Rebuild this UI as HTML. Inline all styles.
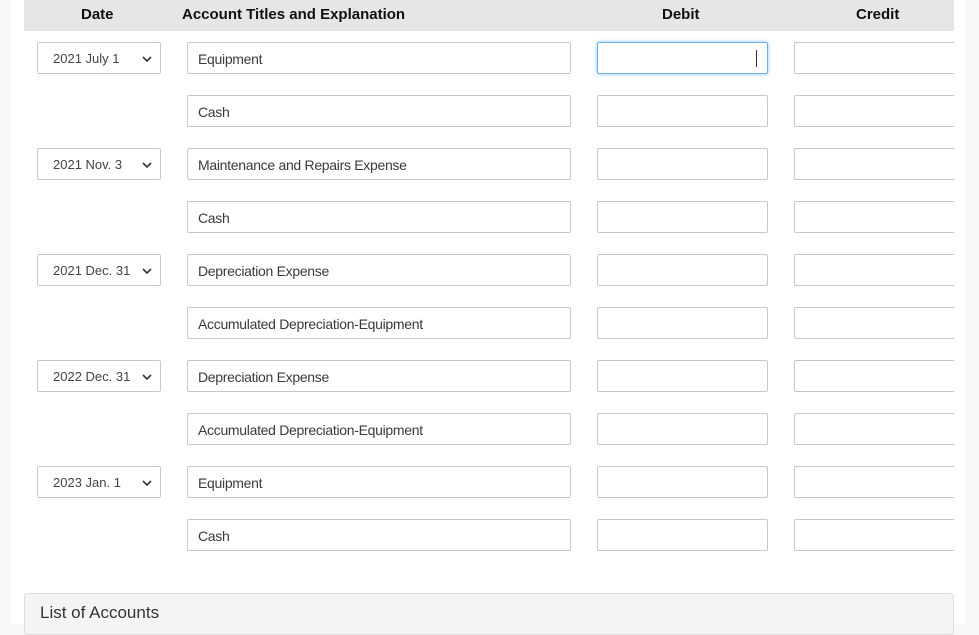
<!DOCTYPE html>
<html><head><style>
body{margin:0;width:979px;height:624px;overflow:hidden;background:#f7f7f7;font-family:"Liberation Sans",sans-serif;position:relative}
.panel{position:absolute;left:10px;top:0;width:956px;height:624px;background:#fff}
.hdr{position:absolute;left:24px;top:0;width:930px;height:31px;background:#e6e6e6}
.h{position:absolute;top:6px;font-weight:bold;font-size:15px;color:#111}
.b{position:absolute;height:30px;border:1px solid #c8c8c8;border-radius:2px;background:#fff;box-sizing:content-box;font-size:14px;color:#3a3a3a;line-height:32px}
.sel{left:37px;width:122px;font-size:13px;color:#444}
.sel span{padding-left:15px}
.sel svg{position:absolute;right:8px;top:13px}
.acc{left:187px;width:382px}
.acc span{padding-left:10px;letter-spacing:-0.3px}
.deb{left:597px;width:169px}
.cre{left:794px;width:170px}
.clip{position:absolute;left:0;top:0;width:954px;height:624px;overflow:hidden}
.list{position:absolute;left:24px;top:593px;width:928px;height:40px;background:#f4f4f4;border:1px solid #ddd;border-radius:3px}
.list span{position:absolute;left:15px;top:9px;font-size:17px;color:#333}
</style></head><body>
<div class="panel"></div>
<div class="hdr"></div>
<div class="h" style="left:81px">Date</div>
<div class="h" style="left:182px">Account Titles and Explanation</div>
<div class="h" style="left:662px">Debit</div>
<div class="h" style="left:856px">Credit</div>
<div class="clip">
<div class="b sel" style="top:42px"><span>2021 July 1</span><svg width="10" height="7" viewBox="0 0 10 7"><path d="M1 1l4 4 4-4" stroke="#333" stroke-width="1.6" fill="none"/></svg></div>
<div class="b acc" style="top:42px"><span>Equipment</span></div>
<div class="b deb" style="top:42px;border-color:#6ab0ef;box-shadow:0 0 4px #8cc4f5"><div style="position:absolute;left:158px;top:7px;width:1px;height:17px;background:#333"></div></div>
<div class="b cre" style="top:42px"></div>

<div class="b acc" style="top:95px"><span>Cash</span></div>
<div class="b deb" style="top:95px"></div><div class="b cre" style="top:95px"></div>

<div class="b sel" style="top:148px"><span>2021 Nov. 3</span><svg width="10" height="7" viewBox="0 0 10 7"><path d="M1 1l4 4 4-4" stroke="#333" stroke-width="1.6" fill="none"/></svg></div>
<div class="b acc" style="top:148px"><span>Maintenance and Repairs Expense</span></div>
<div class="b deb" style="top:148px"></div><div class="b cre" style="top:148px"></div>

<div class="b acc" style="top:201px"><span>Cash</span></div>
<div class="b deb" style="top:201px"></div><div class="b cre" style="top:201px"></div>

<div class="b sel" style="top:254px"><span>2021 Dec. 31</span><svg width="10" height="7" viewBox="0 0 10 7"><path d="M1 1l4 4 4-4" stroke="#333" stroke-width="1.6" fill="none"/></svg></div>
<div class="b acc" style="top:254px"><span>Depreciation Expense</span></div>
<div class="b deb" style="top:254px"></div><div class="b cre" style="top:254px"></div>

<div class="b acc" style="top:307px"><span>Accumulated Depreciation-Equipment</span></div>
<div class="b deb" style="top:307px"></div><div class="b cre" style="top:307px"></div>

<div class="b sel" style="top:360px"><span>2022 Dec. 31</span><svg width="10" height="7" viewBox="0 0 10 7"><path d="M1 1l4 4 4-4" stroke="#333" stroke-width="1.6" fill="none"/></svg></div>
<div class="b acc" style="top:360px"><span>Depreciation Expense</span></div>
<div class="b deb" style="top:360px"></div><div class="b cre" style="top:360px"></div>

<div class="b acc" style="top:413px"><span>Accumulated Depreciation-Equipment</span></div>
<div class="b deb" style="top:413px"></div><div class="b cre" style="top:413px"></div>

<div class="b sel" style="top:466px"><span>2023 Jan. 1</span><svg width="10" height="7" viewBox="0 0 10 7"><path d="M1 1l4 4 4-4" stroke="#333" stroke-width="1.6" fill="none"/></svg></div>
<div class="b acc" style="top:466px"><span>Equipment</span></div>
<div class="b deb" style="top:466px"></div><div class="b cre" style="top:466px"></div>

<div class="b acc" style="top:519px"><span>Cash</span></div>
<div class="b deb" style="top:519px"></div><div class="b cre" style="top:519px"></div>
</div>
<div class="list"><span>List of Accounts</span></div>
</body></html>
